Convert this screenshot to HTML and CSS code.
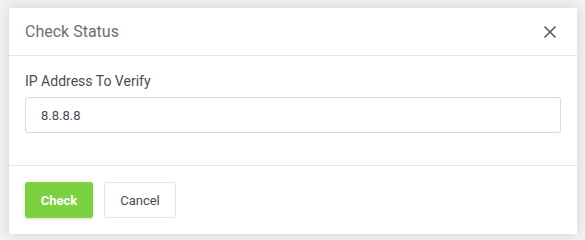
FILE: index.html
```html
<!DOCTYPE html>
<html lang="en">
<head>
    <meta charset="UTF-8">
    <meta name="viewport" content="width=device-width, initial-scale=1.0">
    <title>Check Status</title>
    <link rel="stylesheet" href="styles.css">
</head>
<body>
    <!-- Dialog -->
    <div class="modal">
        <div class="modal-header">
            <h3 class="modal-title">Check Status</h3>
            <button class="close" type="button" aria-label="Close">
                <svg width="14" height="14" viewBox="0 0 14 14">
                    <path d="M1.5 1.5 L12.5 12.5 M12.5 1.5 L1.5 12.5" stroke="#555861" stroke-width="1.6" fill="none"/>
                </svg>
            </button>
        </div>

        <div class="modal-body">
            <label class="field-label" for="ip">IP Address To Verify</label>
            <input class="field-input" id="ip" type="text" value="8.8.8.8">
        </div>

        <div class="modal-footer">
            <button class="btn btn-check" type="button">Check</button>
            <button class="btn btn-cancel" type="button">Cancel</button>
        </div>
    </div>
</body>
</html>
```

FILE: styles.css
```css
/* Allgemein */
body {
    margin: 0;
    padding: 8px 8px 6px 9px;
    background-color: #f1f1f1;
    font-family: Roboto, "Liberation Sans", Arial, sans-serif;
}

/* Dialog */
.modal {
    width: 568px;
    height: 226px;
    background-color: #fff;
    box-shadow: 0 0 12px rgba(0, 0, 0, 0.12);
    display: flex;
    flex-direction: column;
}

.modal-header {
    height: 48px;
    box-sizing: border-box;
    border-bottom: 1px solid #e6e6ea;
    display: flex;
    align-items: center;
    justify-content: space-between;
    padding: 0 20px 0 16px;
}
.modal-title {
    margin: 0;
    font-size: 16px;
    font-weight: 400;
    color: #6b6e78;
}
.close {
    border: none;
    background: none;
    padding: 0;
    width: 14px;
    height: 14px;
    display: flex;
    cursor: pointer;
}

.modal-body {
    height: 110px;
    box-sizing: border-box;
    border-bottom: 1px solid #e6e6ea;
    padding: 17px 16px 0 16px;
}
.field-label {
    display: block;
    font-size: 14px;
    color: #4a4c55;
    line-height: 16px;
    margin-bottom: 8px;
}
.field-input {
    display: block;
    width: 100%;
    height: 36px;
    box-sizing: border-box;
    border: 1px solid #dcd7e6;
    border-radius: 3px;
    padding: 0 15px;
    font-family: inherit;
    font-size: 13px;
    color: #4a4c55;
    outline: none;
}

.modal-footer {
    flex: 1;
    display: flex;
    align-items: flex-start;
    gap: 11px;
    padding: 16px 16px 0 16px;
}

.btn {
    height: 36px;
    border-radius: 3px;
    font-family: inherit;
    font-size: 13px;
    cursor: pointer;
}
.btn-check {
    width: 68px;
    border: none;
    background-color: #7bd13f;
    color: #fff;
    font-weight: 700;
    box-shadow: 0 1px 3px rgba(0, 0, 0, 0.15);
}
.btn-cancel {
    width: 72px;
    border: 1px solid #e3e3ea;
    background-color: #fff;
    color: #4a4c55;
    font-weight: 400;
}
```
